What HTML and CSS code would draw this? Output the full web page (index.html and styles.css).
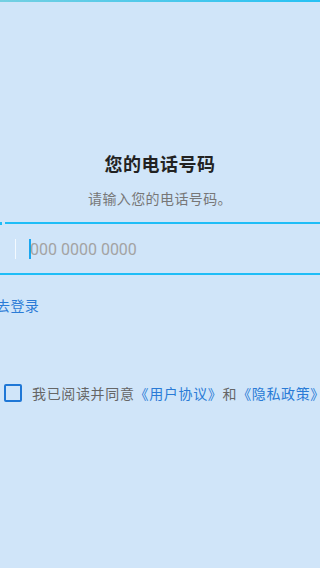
FILE: index.html
```html
<!DOCTYPE html>
<html>
  <head>
    <meta charset="UTF-8">
    <meta name="viewport" content="width=device-width, initial-scale=1">
    <title>登录</title>
    <link rel="stylesheet" href="styles.css">
  </head>
  <body>
    <div class="topbar"></div>
    <div class="page">
      <h3 class="title">您的电话号码</h3>
      <p class="desc">请输入您的电话号码。</p>
      <div class="field">
        <div class="edge">
          <span class="dot"></span>
          <span class="rule"></span>
        </div>
        <div class="inner">
          <span class="sep"></span>
          <span class="caret"></span>
          <span class="placeholder">000 0000 0000</span>
        </div>
      </div>
      <a class="login" href="#">去登录</a>
      <label class="agree">
        <span class="box"></span>
        <span>我已阅读并同意<a href="#">《用户协议》</a>和<a href="#">《隐私政策》</a></span>
      </label>
    </div>
  </body>
</html>
```

FILE: styles.css
```css
a { color: #2a7bd6; text-decoration: none }
body { background: #d0e5f9; color: #222; font-family: "Noto Sans CJK SC", "Noto Sans", sans-serif; letter-spacing: 0.4px; margin: 0; overflow: hidden }

.topbar { background: linear-gradient(90deg, #74d0e2, #26c1f4); height: 2px }
.page { display: flex; flex-direction: column; padding-top: 149px }
.title { font-size: 18px; font-weight: 700; letter-spacing: 0.5px; line-height: 24px; margin: 0; text-align: center }
.desc { color: #777; font-size: 14px; line-height: 20px; margin: 13px 0 0; text-align: center }

.field { border-bottom: 2px solid #1fbdf7; margin-top: 14px }
.edge { align-items: flex-start; display: flex; gap: 3px }
.dot { background: #1fbdf7; height: 3px; width: 2px }
.rule { background: #1fbdf7; flex: 1; height: 2px }
.inner { align-items: center; display: flex; height: 48px }
.sep { background: rgba(255, 255, 255, 0.75); height: 20px; margin-left: 15px; width: 1px }
.caret { background: #1aa7f0; height: 20px; margin-left: 13px; width: 2px }
.placeholder { color: #a3a3a3; font-family: Roboto, sans-serif; font-size: 16px; letter-spacing: 0; margin-left: -1px }

.login { font-size: 14px; line-height: 20px; margin: 20px 0 0 -4px }

.agree { align-items: center; color: #666; display: flex; font-size: 14px; letter-spacing: 0.65px; line-height: 20px; margin-top: 68px; padding-left: 4px; white-space: nowrap }
.box { border: 2px solid #1f77d6; border-radius: 2px; box-sizing: border-box; flex: none; height: 18px; margin-right: 10px; width: 18px }
```
